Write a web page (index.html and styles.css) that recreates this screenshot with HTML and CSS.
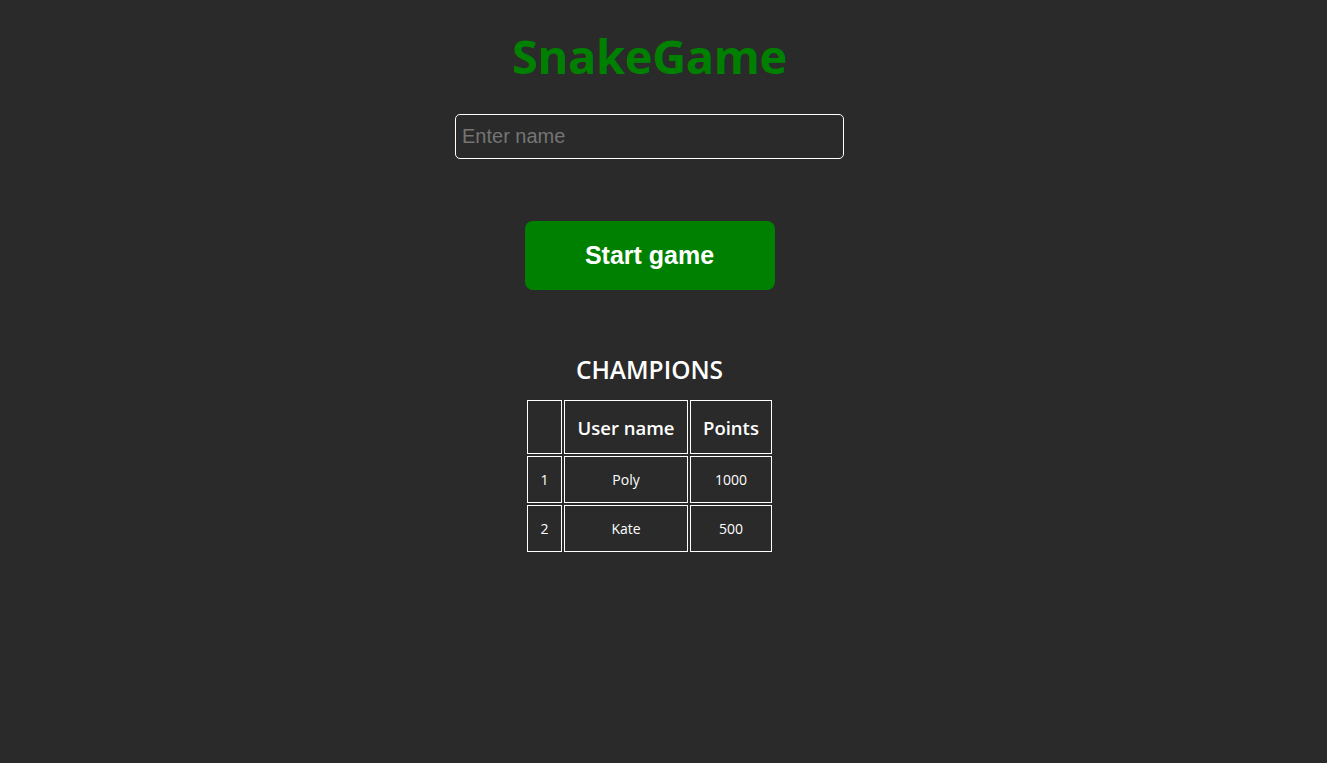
FILE: index.html
```html
<!DOCTYPE html>
<html>
<head>
<meta charset="utf-8">
<title>SnakeGame</title>
<link rel="stylesheet" href="styles.css">
</head>
<body>
<main class="page">
  <h1 class="title">SnakeGame</h1>
  <input class="name-input" type="text" placeholder="Enter name">
  <button class="start-btn">Start game</button>
  <h2 class="champions-title">CHAMPIONS</h2>
  <table class="champions">
    <thead>
      <tr><th class="col-num"></th><th class="col-name">User name</th><th class="col-points">Points</th></tr>
    </thead>
    <tbody>
      <tr><td>1</td><td>Poly</td><td>1000</td></tr>
      <tr><td>2</td><td>Kate</td><td>500</td></tr>
    </tbody>
  </table>
</main>
</body>
</html>
```
FILE: styles.css
```css
html, body {
  margin: 0;
  padding: 0;
  background: #2a2a2a;
  height: 100%;
}
body {
  font-family: "Open Sans", "Noto Sans", sans-serif;
  color: #ffffff;
}
.page {
  width: 1299px;
  display: flex;
  flex-direction: column;
  align-items: center;
}
.title {
  margin: 22px 0 0;
  font-size: 47px;
  font-weight: 700;
  color: #008000;
  line-height: 68px;
  letter-spacing: -0.4px;
}
.name-input {
  box-sizing: border-box;
  width: 389px;
  height: 45px;
  margin-top: 24px;
  padding: 0 6px;
  background: transparent;
  border: 1px solid #ffffff;
  border-radius: 5px;
  font-family: "Liberation Sans", Arial, sans-serif;
  font-size: 20px;
  color: #ffffff;
  outline: none;
}
.name-input::placeholder {
  color: #757575;
}
.start-btn {
  box-sizing: border-box;
  width: 250px;
  height: 69px;
  margin-top: 62px;
  background: #008000;
  border: none;
  border-radius: 8px;
  color: #ffffff;
  font-family: "Liberation Sans", Arial, sans-serif;
  font-size: 25px;
  font-weight: 700;
}
.champions-title {
  margin: 63px 0 0;
  font-size: 24.5px;
  font-weight: 600;
  line-height: 34px;
  color: #ffffff;
}
.champions {
  margin-top: 11px;
  border-collapse: separate;
  border-spacing: 2px;
}
.champions th, .champions td {
  border: 1px solid #ffffff;
  text-align: center;
  padding: 0;
}
.champions th {
  height: 52px;
  font-size: 18.5px;
  font-weight: 600;
}
.champions td {
  height: 45px;
  font-size: 14px;
}
.col-num { width: 33px; }
.col-name { width: 122px; }
.col-points { width: 80px; }
```
